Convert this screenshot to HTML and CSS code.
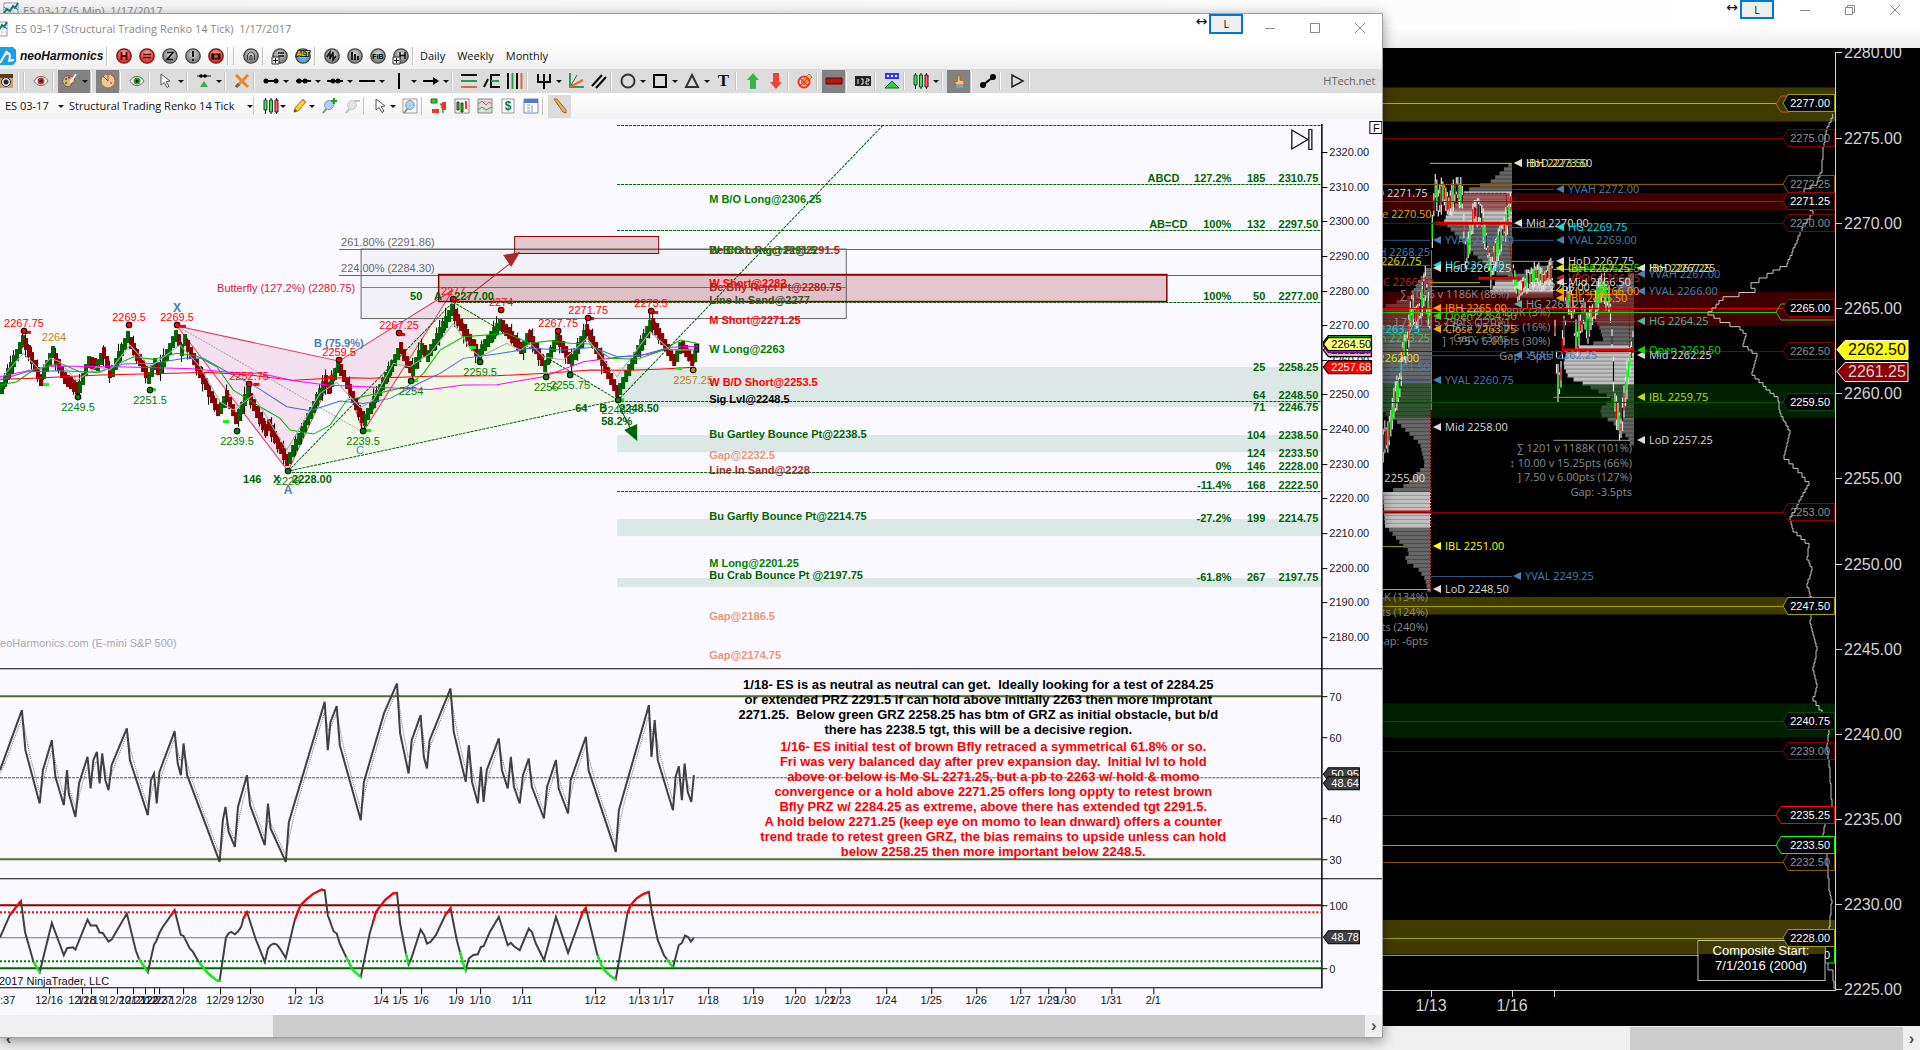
FILE: index.html
```html
<!DOCTYPE html>
<html lang="en">
<head>
<meta charset="utf-8">
<title>ES 03-17 charts</title>
<link rel="stylesheet" href="styles.css">
</head>
<body>
<svg class="defs" aria-hidden="true">
  <defs>
    <radialGradient id="gr" cx=".5" cy=".35"><stop offset="0" stop-color="#ffb0a8"/><stop offset="1" stop-color="#e8302c"/></radialGradient>
    <radialGradient id="gg" cx=".5" cy=".35"><stop offset="0" stop-color="#d8d8d8"/><stop offset="1" stop-color="#858585"/></radialGradient>
    <symbol id="red" viewBox="0 0 16 16"><circle cx="8" cy="8" r="7.2" fill="url(#gr)" stroke="#6b1512" stroke-width="1.3"/></symbol>
    <symbol id="gray" viewBox="0 0 16 16"><circle cx="8" cy="8" r="7.2" fill="url(#gg)" stroke="#444" stroke-width="1.3"/></symbol>
    <symbol id="cursor" viewBox="0 0 16 16"><path d="M3 1l9 7-4 .6 3 4.6-2 1.3-2.800-5L3 12z" fill="#fff" stroke="#555"/></symbol>
    <symbol id="candles" viewBox="0 0 16 16"><path d="M2.500 0v16M8 0v16M13.500 0v16" stroke="#111"/><path d="M1 2h3v10H1zM6.500 2h3v12h-3z" fill="#4be04b" stroke="#143"/><path d="M12 2h3v12h-3z" fill="#f66" stroke="#511"/></symbol>
    <symbol id="pencil" viewBox="0 0 16 16"><path d="M2 14l1-4 8-9 3 3-8 9z" fill="#fc3" stroke="#a70"/><path d="M2 14l1-3 2 2z" fill="#333"/><path d="M10 2l3 3 1-1-3-3z" fill="#e77"/></symbol>
    <symbol id="lens" viewBox="0 0 16 16"><path d="M2 15l4-5" stroke="#789" stroke-width="2"/><circle cx="8" cy="7" r="4.500" fill="#a9d2ee" stroke="#7f9fb8"/></symbol>
    <symbol id="eye" viewBox="0 0 16 16"><path d="M1 8c3-6 11-6 14 0-3 6-11 6-14 0z" fill="#fff" stroke="#765"/><circle cx="8" cy="8" r="3.500" fill="currentColor"/><circle cx="8" cy="8" r="1.500"/></symbol>
    <symbol id="win" viewBox="0 0 16 16"><path d="M1 1h14v14H1z" fill="#fff" stroke="#8895aa"/><path d="M5 1v14M10 1v14M1 6h14M1 11h14" stroke="#cdd6e4"/><path d="M1 11l3-4 3 2 3-5 2 2 3-5" fill="none" stroke="#17805b" stroke-width="2"/><path d="M1 5l5 4 5-5 4 4" fill="none" stroke="#36c" stroke-width="1"/></symbol>
  </defs>
</svg>

<main class="desktop">
  <section class="window back" aria-label="ES 03-17 5 Min">
    <header class="title">
      <svg class="icon"><use href="#win"/></svg><h2>ES 03-17 (5 Min)&nbsp; 1/17/2017</h2>
      <div class="controls"><span class="grip">↔</span><button class="link">L</button>
        <button aria-label="Minimize"><svg class="ctl" viewBox="0 0 12 12"><path d="M1 6.500h10"/></svg></button>
        <button aria-label="Restore"><svg class="ctl" viewBox="0 0 12 12"><path d="M1.500 3.500h7v7h-7zM3.500 3.500v-2h7v7h-2"/></svg></button>
        <button aria-label="Close"><svg class="ctl" viewBox="0 0 12 12"><path d="M1 1l10 10M11 1L1 11"/></svg></button></div>
    </header>
    <div class="strip"></div>
    <svg class="chart dark" id="profile" viewBox="0 48 1920 978" role="img" aria-label="5 minute chart with volume profile"></svg>
    <footer class="scroll"><button aria-label="Scroll left">‹</button><div class="track"><div class="thumb"></div></div><button aria-label="Scroll right">›</button></footer>
  </section>

  <section class="window front" aria-label="ES 03-17 Renko">
    <header class="title">
      <svg class="icon"><use href="#win"/></svg><h1>ES 03-17 (Structural Trading Renko 14 Tick)&nbsp; 1/17/2017</h1>
      <div class="controls"><span class="grip">↔</span><button class="link">L</button>
        <button aria-label="Minimize"><svg class="ctl" viewBox="0 0 12 12"><path d="M1 6.500h10"/></svg></button>
        <button aria-label="Maximize"><svg class="ctl" viewBox="0 0 12 12"><path d="M1.500 1.500h9v9h-9z"/></svg></button>
        <button aria-label="Close"><svg class="ctl" viewBox="0 0 12 12"><path d="M1 1l10 10M11 1L1 11"/></svg></button></div>
    </header>

    <nav class="bar harmonics">
      <svg class="logo" viewBox="0 0 16 18"><path d="M0 0h13l3 3v12l-3 3H0z" fill="#1c9fe6"/><path d="M0 16l7-12M5 8c4-4 6-1 4 6M8 14l6-1" fill="none" stroke="#fff" stroke-width="2"/></svg>
      <b class="brand">neoHarmonics</b><i class="sep"></i>
      <button class="tb" aria-label="Harmonics"><svg class="icon"><use href="#red"/><path d="M5.500 4v8M10.500 4v8M5 8h6" stroke="#400" stroke-width="1.800"/></svg></button>
      <button class="tb" aria-label="Levels"><svg class="icon"><use href="#red"/><path d="M4 6.500h8M4 9.500h8" stroke="#400" stroke-width="1.600"/></svg></button>
      <button class="tb" aria-label="Zigzag"><svg class="icon"><use href="#gray"/><path d="M5 4.500h6L5 11.500h6" fill="none" stroke="#111" stroke-width="1.600"/></svg></button>
      <button class="tb" aria-label="Alert"><svg class="icon"><use href="#gray"/><path d="M8 3v6M8 11v2" stroke="#111" stroke-width="2"/></svg></button>
      <button class="tb" aria-label="Snapshot"><svg class="icon"><use href="#red"/><path d="M3.500 5.500h9v6h-9z"/><circle cx="8" cy="8.500" r="2" fill="#e43"/></svg></button>
      <i class="sep"></i><i class="sep"></i>
      <button class="tb" aria-label="Magnet"><svg class="icon"><use href="#gray"/><path d="M4.500 12V7q3.500-6 7 0v5M7 12V8q1-2 2 0v4" fill="none" stroke="#333"/></svg></button><i class="sep"></i>
      <button class="tb" aria-label="Add level"><svg class="icon"><use href="#gray"/><path d="M6 5h6M6 8h6" stroke="#111" stroke-width="1.500"/><path d="M0 9h7v7H0z" fill="#eee" stroke="#333"/><path d="M3.500 10v5M1 12.500h5" stroke="#111"/></svg></button>
      <button class="tb" aria-label="Alternate"><svg class="icon"><use href="#gray"/><path d="M4 10h8l-2 4H6z" fill="#3bb6ef"/><text x="8" y="8" class="glyph alt">ALT</text></svg></button><i class="sep"></i>
      <button class="tb" aria-label="Swings"><svg class="icon"><use href="#gray"/><path d="M3 9l3-5v7l3-7v8l3-4" fill="none" stroke="#111" stroke-width="1.500"/></svg></button>
      <button class="tb" aria-label="Volume"><svg class="icon"><use href="#gray"/><path d="M5 4v8M8 6v6M11 8v4" stroke="#111" stroke-width="1.800"/></svg></button>
      <button class="tb" aria-label="Fibonacci"><svg class="icon"><use href="#gray"/><text x="8" y="11" class="glyph">FIB</text></svg></button>
      <button class="tb" aria-label="Add pattern"><svg class="icon"><use href="#gray"/><path d="M7 4v7M12 4v7M7 7.500h5" stroke="#111" stroke-width="1.500"/><path d="M0 9h7v7H0z" fill="#eee" stroke="#333"/><path d="M3.500 10v5M1 12.500h5" stroke="#111"/></svg></button>
      <i class="sep"></i><span class="words"><button>Daily</button><button>Weekly</button><button>Monthly</button></span>
    </nav>

    <nav class="bar tools">
      <button class="tb" aria-label="Camera"><svg class="icon"><path d="M1 1h14v14H1z" fill="#c9a36a"/><path d="M1 1h14v4H1z" fill="#5c3a20"/><circle cx="8" cy="9" r="4.500" fill="#eee" stroke="#333"/><circle cx="8" cy="9" r="2.500" fill="#223"/></svg></button><i class="sep"></i><i class="sep"></i>
      <button class="tb redish" aria-label="Hide"><svg class="icon"><use href="#eye"/></svg></button><i class="sep"></i>
      <button class="dd on" aria-label="Palette"><svg class="icon"><path d="M1 6c2-5 11-4 12 2-1 3-4 1-4 4-1 4-10 1-8-6z" fill="#e3b871" stroke="#754"/><circle cx="4" cy="6" r="1.200" fill="#36c"/><circle cx="7" cy="4.500" r="1.200" fill="#d22"/><circle cx="4" cy="10" r="1.200" fill="#2a2"/><path d="M14 1l-6 9" stroke="#eee" stroke-width="2"/></svg></button><i class="sep"></i>
      <button class="tb on" aria-label="Cookie"><svg class="icon"><circle cx="8" cy="8" r="7" fill="#eec795" stroke="#a63"/><path d="M8 8L3 3M8 8V1" stroke="#c33"/><circle cx="11" cy="10" r="1" fill="#b65"/></svg></button><i class="sep"></i>
      <button class="tb greenish" aria-label="Show"><svg class="icon"><use href="#eye"/></svg></button><i class="sep"></i>
      <button class="dd" aria-label="Cursor"><svg class="icon"><use href="#cursor"/></svg></button><i class="sep"></i>
      <button class="dd" aria-label="Marker"><svg class="icon"><path d="M1 3h14" stroke="#111"/><circle cx="5" cy="3" r="1.800"/><circle cx="9" cy="3" r="1.800"/><path d="M8 8l4 6H4z" fill="#35b34a"/></svg></button><i class="sep"></i>
      <button class="tb" aria-label="Remove"><svg class="icon"><path d="M2 2l12 12M14 2L2 14" stroke="#e7892b" stroke-width="3"/><path d="M2 14l3-3" stroke="#666" stroke-width="3"/></svg></button><i class="sep"></i>
      <button class="dd" aria-label="Segment"><svg class="icon"><path d="M1 8h14" stroke="#000" stroke-width="2"/><circle cx="3" cy="8" r="2.500"/><circle cx="13" cy="8" r="2.500"/></svg></button>
      <button class="dd" aria-label="Ray"><svg class="icon"><path d="M1 8h15" stroke="#000" stroke-width="2"/><circle cx="4" cy="8" r="2.500"/><circle cx="10" cy="8" r="2.500"/></svg></button>
      <button class="dd" aria-label="Extended line"><svg class="icon"><path d="M0 8h16" stroke="#000" stroke-width="2"/><circle cx="6" cy="8" r="2.500"/><circle cx="11" cy="8" r="2.500"/></svg></button>
      <button class="dd" aria-label="Horizontal line"><svg class="icon"><path d="M0 8h16" stroke="#000" stroke-width="2"/></svg></button>
      <button class="dd" aria-label="Vertical line"><svg class="icon"><path d="M8 0v16" stroke="#000" stroke-width="2"/></svg></button>
      <button class="dd" aria-label="Arrow line"><svg class="icon"><path d="M0 8h12" stroke="#000" stroke-width="2"/><path d="M10 4l6 4-6 4z"/></svg></button><i class="sep"></i>
      <button class="tb" aria-label="Retracement"><svg class="icon"><path d="M0 2h16" stroke="#111" stroke-width="2"/><path d="M0 8h16" stroke="#2a9d4d" stroke-width="2"/><path d="M0 14h16" stroke="#e8662f" stroke-width="2"/></svg></button>
      <button class="tb" aria-label="Extension"><svg class="icon"><path d="M7 2h9M7 14h9M7 1v14M0 14l4-8" stroke="#111" stroke-width="2" fill="none"/><path d="M7 8h8" stroke="#2a9d4d" stroke-width="2"/></svg></button>
      <button class="tb" aria-label="Time lines"><svg class="icon"><path d="M1 0v16M10 0v16" stroke="#111" stroke-width="2"/><path d="M5.500 0v16" stroke="#2a9d4d" stroke-width="2"/><path d="M14.500 0v16" stroke="#e8662f" stroke-width="2"/></svg></button><i class="sep"></i>
      <button class="dd" aria-label="Pitchfork"><svg class="icon"><path d="M2 1v8h12V1M8 1v15" fill="none" stroke="#000" stroke-width="2"/></svg></button>
      <button class="tb" aria-label="Fan"><svg class="icon"><path d="M2 0v14h14" fill="none" stroke="#2a9d4d" stroke-width="2"/><path d="M2 14L9 2" stroke="#555"/><path d="M2 14l13-7" stroke="#e8662f" stroke-width="2"/></svg></button>
      <button class="tb" aria-label="Channel"><svg class="icon"><path d="M1 13L11 2M5 15L15 4" stroke="#000" stroke-width="2"/></svg></button><i class="sep"></i>
      <button class="dd" aria-label="Ellipse"><svg class="icon"><circle cx="8" cy="8" r="6.500" fill="none" stroke="#333" stroke-width="2"/></svg></button>
      <button class="dd" aria-label="Rectangle"><svg class="icon"><path d="M2 2h12v12H2z" fill="none" stroke="#000" stroke-width="2"/></svg></button>
      <button class="dd" aria-label="Triangle"><svg class="icon"><path d="M8 2l6 12H2z" fill="none" stroke="#333" stroke-width="2"/></svg></button>
      <button class="tb serif">T</button><i class="sep"></i>
      <button class="tb" aria-label="Arrow up"><svg class="icon"><path d="M8 0l6 7h-3v9H5V7H2z" fill="#3bb54a"/></svg></button>
      <button class="tb" aria-label="Arrow down"><svg class="icon"><path d="M8 16l6-7h-3V0H5v9H2z" fill="#f44336"/></svg></button><i class="sep"></i>
      <button class="tb" aria-label="No drawing"><svg class="icon"><path d="M4 9l8-8 3 3-8 8z" fill="#ffcf4a" stroke="#b70"/><circle cx="7" cy="9" r="5.500" fill="none" stroke="#e33" stroke-width="2"/><path d="M3 5l8 8M11 5l-8 8" stroke="#e33" stroke-width="1.500"/></svg></button><i class="sep"></i>
      <button class="tb on" aria-label="Zone"><svg class="icon"><path d="M0 5h16v6H0z" fill="#b11" stroke="#600"/></svg></button><i class="sep"></i>
      <button class="tb" aria-label="Counter"><svg class="icon"><path d="M0 3h16v10H0z" fill="#222"/><path d="M3 6v5M6 6h2v5H6M11 6h3v2h-3v3h3" fill="none" stroke="#eee"/></svg></button><i class="sep"></i>
      <button class="tb" aria-label="Session"><svg class="icon"><path d="M1 0h14v6H1z" fill="#33f"/><path d="M3 3h2M7 3h2M11 3h2" stroke="#fff" stroke-width="2"/><path d="M8 8l7 7H1z" fill="#3c4" stroke="#063"/></svg></button><i class="sep"></i>
      <button class="dd" aria-label="Chart style"><svg class="icon"><use href="#candles"/></svg></button><i class="sep"></i>
      <button class="tb on" aria-label="Pointer"><svg class="icon"><path d="M7 2h2v5l4 1v4H5L3 8l3 1z" fill="#f5c091" stroke="#a63"/><path d="M5 12h7v3H5z" fill="#4bd"/></svg></button><i class="sep"></i>
      <button class="tb" aria-label="Link"><svg class="icon"><path d="M3 12l10-8" stroke="#000" stroke-width="2"/><circle cx="3" cy="12" r="3"/><circle cx="13" cy="4" r="3"/></svg></button><i class="sep"></i>
      <button class="tb" aria-label="Play"><svg class="icon"><path d="M3 2l11 6-11 6z" fill="none" stroke="#222" stroke-width="1.500"/></svg></button><i class="sep"></i>
      <a class="brandlink" href="#">HTech.net</a>
    </nav>

    <nav class="bar setup">
      <span class="pick"><select aria-label="Instrument" class="inst"><option>ES 03-17</option></select></span>
      <span class="pick"><select aria-label="Period" class="period"><option>Structural Trading Renko 14 Tick</option></select></span><i class="sep"></i>
      <button class="dd" aria-label="Chart style"><svg class="icon"><use href="#candles"/></svg></button>
      <button class="dd" aria-label="Draw"><svg class="icon"><use href="#pencil"/></svg></button>
      <button class="tb" aria-label="Zoom in"><svg class="icon"><use href="#lens"/><path d="M13 0v6M10 3h6" stroke="#1a1" stroke-width="2"/></svg></button>
      <button class="tb faded" aria-label="Zoom out"><svg class="icon"><use href="#lens"/><path d="M10 3h6" stroke="#888" stroke-width="2"/></svg></button><i class="sep"></i>
      <button class="dd" aria-label="Cursor"><svg class="icon"><use href="#cursor"/></svg></button>
      <button class="tb" aria-label="Data box"><svg class="icon"><path d="M1 1h14v14H1z" fill="#fff" stroke="#999"/><use href="#lens"/></svg></button><i class="sep"></i>
      <button class="tb" aria-label="Trader"><svg class="icon"><path d="M0 1h6v4H0zM9 6h3v9" fill="#3c3" stroke="#171"/><path d="M1 11h7v4H1zM11 4h4v8h-4z" fill="#e33"/></svg></button>
      <button class="tb" aria-label="Series"><svg class="icon"><path d="M1 1h14v14H1z" fill="#fff" stroke="#888"/><path d="M3 4h2v8H3zM7 5h2v9H7z" fill="#3c3" stroke="#141"/><path d="M11 3h2v8h-2z" fill="#e33"/></svg></button>
      <button class="tb" aria-label="Indicators"><svg class="icon"><path d="M1 1h14v14H1z" fill="#ddd" stroke="#888"/><path d="M1 6l4-3 4 4 3-3 3 2" fill="none" stroke="#e55"/><path d="M1 12l4-3 4 3 6-3" fill="none" stroke="#3a3"/></svg></button>
      <button class="tb" aria-label="Strategies"><svg class="icon"><path d="M2 1h12v14H2z" fill="#fff" stroke="#999"/><text x="8" y="12" class="glyph cash">$</text></svg></button>
      <button class="tb" aria-label="Properties"><svg class="icon"><path d="M1 1h14v14H1z" fill="#fff" stroke="#78b"/><path d="M1 1h14v4H1z" fill="#57c"/><path d="M4 7h3M4 10h3M4 13h3M9 7v7" stroke="#79d"/></svg></button><i class="sep"></i>
      <button class="tb lit" aria-label="Edit"><svg class="icon"><path d="M2 1l3 0 9 11v3l-3-1z" fill="#f4ab50" stroke="#a62"/></svg></button>
    </nav>

    <svg class="chart light" id="renko" viewBox="0 119 1382 896" role="img" aria-label="Renko chart with oscillators"></svg>
    <footer class="scroll"><div class="track"><div class="thumb"></div></div><button aria-label="Scroll right">›</button></footer>
  </section>
</main>
<script src="charts.js"></script>
</body>
</html>
```
FILE: styles.css
```css
* { box-sizing: border-box; }
body { margin: 0; background: #f0f0f0; font: 12px/16px "Open Sans", "Noto Sans", sans-serif; color: #111; }
button { border: 0; padding: 0; background: none; font: inherit; color: inherit; }
.defs { position: absolute; width: 0; height: 0; }
.desktop { position: relative; min-height: 100vh; overflow: hidden; background: #f0f0f0; }
.window { display: flex; flex-direction: column; }
.front { position: absolute; top: 13px; left: 0; width: calc(72% + 1px); background: #fff; border: solid #a0a0a0; border-width: 1px 1px 1px 0; box-shadow: 0 3px 12px rgba(0,0,0,.4); }

.title { display: flex; align-items: center; background: #fff; color: #888; overflow: hidden; }
.title h1, .title h2 { margin: 0; font-size: 11px; font-weight: 400; line-height: 16px; white-space: nowrap; }
.back .title { height: 25px; padding: 0 3px; gap: 4px; align-items: flex-start; background: linear-gradient(90deg, #f4f4f4, #fff); }
.back .title h2 { padding-top: 3px; }
.back .title > .icon { margin-top: 2px; }
.front .title { height: 29px; gap: 7px; }
.front .title > .icon { margin-left: -8px; }
.controls { margin-left: auto; display: flex; align-items: flex-start; height: 100%; }
.controls > button:not(.link) { width: 45px; height: 28px; display: grid; place-items: center; }
.back .controls > button:not(.link) { height: 20px; }
.ctl { width: 12px; height: 12px; fill: none; stroke: #8a8a8a; }
.grip { color: #111; font: 14px/14px "DejaVu Sans", sans-serif; margin-right: 2px; }
.link { width: 34px; height: 20px; border: 2px solid #0078d7; background: #eee; color: #111; font-size: 11px; line-height: 14px; }
.back .link { height: 19px; margin-right: 8px; }
.front .link { margin-right: 4px; }
.strip { height: 23px; background: linear-gradient(#fff, #eee); }

.icon { width: 16px; height: 16px; flex: none; overflow: visible; }
.bar { display: flex; align-items: center; overflow: hidden; }
.harmonics { height: 26px; background: linear-gradient(#fff, #f1f1f1); }
.tools { height: 24px; background: #dcdcdc; }
.tools > .tb:first-child { margin-left: -6px; }
.setup { height: 26px; background: linear-gradient(#fff, #f3f3f3); }
.tb, .dd { flex: none; height: 23px; display: flex; align-items: center; }
.tb { width: 23px; justify-content: center; }
.dd { width: 32px; padding-left: 4px; gap: 4px; }
.setup .dd { width: 29px; gap: 1px; }
.dd::after, .pick::after { content: ""; border: 3px solid transparent; border-top-color: #111; border-bottom: 0; }
.on { background: #828282; }
.lit { background: #dcdcdc; }
.faded { opacity: .5; filter: grayscale(1); }
.redish { color: #c33; }
.greenish { color: #2a2; }
.serif { font: bold 17px/20px "Liberation Serif", serif; }
.sep { flex: none; width: 6px; height: 18px; border-left: 1px solid #c4c4c4; border-right: 1px solid transparent; background: linear-gradient(#fff, #fff) 0 0 / 1px 100% no-repeat; }
.logo { width: 16px; height: 18px; flex: none; }
.brand { font: italic bold 12px/16px "Liberation Sans", sans-serif; width: 86px; margin-left: 4px; }
.words { display: flex; gap: 12px; margin-left: 2px; font-size: 11px; }
.brandlink { margin-left: auto; margin-right: 7px; color: #666; font-size: 11px; text-decoration: none; }
.pick { display: flex; align-items: center; gap: 4px; }
.pick select { appearance: none; border: 0; padding: 0; background: none; font: 11px/16px "Open Sans", sans-serif; color: #111; }
.inst { width: 49px; }
.period { width: 174px; }
.pick:first-child { margin-left: 5px; margin-right: 5px; }
.glyph { font: bold 7px "Liberation Sans", sans-serif; text-anchor: middle; }
.alt { fill: #ffe600; stroke: #222; stroke-width: 2px; paint-order: stroke; }
.cash { font-size: 12px; fill: #171; }

.scroll { display: flex; height: 22px; background: #f0f0f0; color: #555; }
.scroll .track { flex: 1; display: flex; }
.scroll .thumb { background: #cdcdcd; }
.scroll button { width: 17px; font: bold 17px/16px "Liberation Sans", sans-serif; }
.front .thumb { flex: 1; margin-left: 20%; }
.back .scroll { height: 24px; padding-top: 1px; }
.back .thumb { width: 14.500%; margin-left: auto; }

.chart { display: block; width: 100%; height: auto; font-family: "Liberation Sans", sans-serif; font-size: 11px; }
.light { background: #f9f9ff; }
.dark { background: #000; }
.chart .b { font-weight: bold; }
.chart .note { font-size: 13px; font-weight: bold; text-anchor: middle; }
.chart .mark { font-size: 12px; }
.chart .axis { font-size: 16px; fill: #d3d3d3; }
.chart .ui { font-family: "Open Sans", sans-serif; font-size: 11px; }
.chart .end { text-anchor: end; }
.chart .mid { text-anchor: middle; }
.chart .start { font-size: 13px; fill: #fff; text-anchor: middle; }
```
FILE: charts.js
```js
const NS = 'http://www.w3.org/2000/svg';
let root;
function el(tag, attrs, text) {
  const n = document.createElementNS(NS, tag);
  for (const k in attrs) n.setAttribute(k, attrs[k]);
  if (text !== undefined) n.textContent = text;
  root.appendChild(n);
  return n;
}
const line = (x1, y1, x2, y2, stroke, extra) => el('line', { x1, y1, x2, y2, stroke, ...extra });
const rect = (x, y, width, height, fill, extra) => el('rect', { x, y, width, height, fill, ...extra });
const path = (pts, stroke, extra) => el('polyline', { points: pts.map(p => p.join(',')).join(' '), fill: 'none', stroke, ...extra });
const label = (x, y, s, fill, cls) => el('text', { x, y: y + 4, fill, class: cls || '' }, s);
const pairs = s => s.trim().split(/\s+/).map(p => p.split(',').map(Number));
const map = (s, x0, y0, sx, sy) => pairs(s).map(([x, y]) => [+(x0 + x / sx).toFixed(1), +(y0 + y / sy).toFixed(1)]);
let seed = 7;
const rnd = () => (seed = (seed * 16807) % 2147483647) / 2147483647;
function at(pts, x) {
  for (let i = 1; i < pts.length; i++) if (x <= pts[i][0]) {
    const [a, b] = [pts[i - 1], pts[i]];
    return a[1] + (b[1] - a[1]) * (x - a[0]) / (b[0] - a[0]);
  }
  return pts[pts.length - 1][1];
}
const slice = (pts, a, b) => [[a, at(pts, a)], ...pts.filter(p => p[0] > a && p[0] < b), [b, at(pts, b)]];

/* ---------- Renko window ---------- */
root = document.getElementById('renko');
const G = '#006400', DASH = { 'stroke-dasharray': '3 1' };

// support zones
[[367, 40], [435, 17], [519, 17], [578, 9]].forEach(([y, h]) => rect(617, y, 704, h, '#1e7838', { 'fill-opacity': .13 }));

// harmonic pattern fills
el('polygon', { points: '288,471 453,300 618,400', fill: '#adff2f', 'fill-opacity': .12 });
el('polygon', { points: '177,326 288,471 339,361', fill: '#dc3c78', 'fill-opacity': .13 });
el('polygon', { points: '339,361 363,432 453,290', fill: '#dc3c78', 'fill-opacity': .13 });
path(pairs('177,326 339,361 288,471 177,326'), '#dc3c5a');
path(pairs('339,361 363,432 453,290 339,361'), '#dc3c5a');
path(pairs('177,326 363,432'), '#aaa', { 'stroke-dasharray': '2 1' });
path(pairs('288,471 453,302 618,400 288,471'), G, DASH);
path(pairs('617,401 883,125'), G, DASH);

// retracement box and resistance zones
rect(361, 249, 485, 69.5, '#888', { 'fill-opacity': .06, stroke: '#666' });
line(339, 249.5, 1321, 249.5, '#666'); line(339, 275.5, 1321, 275.5, '#666');
line(361, 287.5, 846, 287.5, '#dc5078');
rect(514.5, 236.5, 144, 17, '#8b0000', { 'fill-opacity': .2, stroke: '#8b0000' });
rect(438.5, 274.5, 728, 27, '#8b0000', { 'fill-opacity': .2, stroke: '#8b0000', 'stroke-width': 1.5 });
[[617, 125.5], [617, 184.5], [617, 230.5], [453, 302.5], [617, 401.5], [288, 472.5], [617, 491.5]].forEach(([x, y]) => line(x, y, 1321, y, G, DASH));

// bricks
const swings = pairs('0,390 23,339 40,380 52,352 64,378 78,390 88,362 97,365 103,353 110,375 127,337 148,378 155,362 158,372 176,334 181,350 184,340 218,412 226,396 236,420 247,393 265,430 268,425 287,462 325,381 328,388 338,365 363,422 400,348 408,366 412,370 422,347 427,356 451,310 478,355 484,345 500,324 522,350 528,334 544,366 557,337 570,362 586,330 617,393 651,322 674,362 680,345 686,352 692,362 697,348');
for (let x = 1; x < 697; x += 3) {
  const y = at(swings, x), up = at(swings, x + 1.5) <= at(swings, x - 1.5);
  if (rnd() > .6) line(x + .5, y - 6 - rnd() * 8, x + .5, y + 6 + rnd() * 8, '#000');
  rect(x - 1, Math.round(y - 6), 4, 12, up ? '#006400' : '#8b0000');
}
rect(695.5, 344, 3, 8, '#006400', { stroke: '#000' });

// averages, in units of a third of a pixel from (0,220) and (330,220)
const avg = (left, right, c) => path([...map(left, 0, 220, 3, 3), ...map(right, 330, 220, 3, 3)], c);
avg('0,478 100,475 300,465 520,460 620,457 760,466 880,481 1000,474', '60,473 120,475 300,469 500,467 660,459 780,450 900,451 1000,447 1090,442', '#f00');
avg('0,470 150,438 350,440 580,446 680,456 780,460 880,482 980,495', '100,500 300,508 400,495 500,494 640,470 760,425 860,412 960,402 1020,382 1100,379', '#f0f');
avg('0,480 80,455 180,452 290,457 370,432 460,430 560,414 610,415 680,455 760,495 860,560 930,572 1020,543', '100,550 180,535 270,488 330,460 400,415 500,402 600,385 700,390 790,382 860,410 930,407 1000,387 1100,390', '#4169e1');
avg('0,495 50,485 100,450 180,430 240,455 300,457 400,410 460,418 530,400 590,408 650,440 700,510 780,560 840,595 870,630 940,642 990,615 1040,540', '120,525 230,500 280,460 330,390 400,350 470,345 530,340 600,370 660,362 720,370 780,372 840,415 920,418 1000,390 1050,360 1100,370', '#00b400');
avg('0,478 70,400 120,450 150,415 180,425 230,482 290,440 330,450 390,375 450,440 540,375 600,440 660,545 700,570 760,525 860,690 960,520 1010,487 1060,540', '90,562 130,540 190,430 240,440 300,400 370,310 420,385 450,410 530,370 570,390 600,370 640,410 700,420 770,355 860,470 960,335 1020,390 1090,390', '#a9a9a9');

// lime trend flashes and swing dots
map('75,337 540,319 760,493', 0, 220, 3, 3).forEach(([x, y]) => rect(x, y - 1.5, 6, 3, '#f00'));
rect(327, 376, 6, 3, '#f00');
[[43, 383], [150, 388], [223, 420], [365, 429], [412, 379], [470, 346], [676, 367], [618, 398]].forEach(([x, y]) => rect(x, y, 6, 3, '#0f0'));
[[453, 299], [399, 333], [588, 317], [652, 311]].forEach(([x, y]) => rect(x, y, 6, 3, '#f00'));
const dot = (x, y, c) => el('circle', { cx: x, cy: y, r: 2.8, fill: c, stroke: '#000' });
[[24, 331, '2267.75'], [129, 325, '2269.5'], [177, 325, '2269.5'], [249, 384, '2252.75'], [339, 360, '2259.5'], [399, 333, '2267.25'], [453, 299, '2277'], [501, 310, '2274'], [558, 331, '2267.75'], [588, 318, '2271.75'], [651, 311, '2273.5']]
  .forEach(([x, y, s]) => { dot(x, y, '#f00'); label(x, y - 8, s, '#f00', 'mid'); });
[[78, 397, '2249.5'], [150, 390, '2251.5'], [237, 431, '2239.5'], [288, 471, '2228'], [363, 431, '2239.5'], [411, 381, '2254'], [480, 362, '2259.5'], [546, 377, '2256'], [570, 375, '2255.75'], [618, 400, '2248.5']]
  .forEach(([x, y, s]) => { dot(x, y, '#008000'); label(x, y + 10, s, '#008000', 'mid'); });
dot(693, 370, '#b8860b'); label(693, 380, '2257.25', '#b8860b', 'mid'); label(54, 337, '2264', '#b8860b', 'mid');
label(177, 308, 'X', '#4682b4', 'b mid mark'); label(288, 490, 'A', '#4682b4', 'b mid mark'); label(360, 450, 'C', '#4682b4', 'mid');
label(314, 343, 'B (75.9%)', '#4682b4', 'b');
label(217, 288, 'Butterfly (127.2%) (2280.75)', '#dc143c');
label(341, 242, '261.80% (2291.86)', '#696969'); label(341, 268, '224.00% (2284.30)', '#696969');
[[243, 479, '146'], [273, 479, 'X'], [292, 479, '2228.00'], [410, 296, '50'], [434, 296, 'A'], [454, 296, '2277.00'], [575, 408, '64'], [599, 408, 'B'], [619, 408, '2248.50'], [601, 421, '58.2%']].forEach(([x, y, s]) => label(x, y, s, G, 'b'));

// projected moves
line(463, 300, 512, 262, '#a52a2a'); el('polygon', { points: '503,255 520,252 511,267', fill: '#a52a2a' });
line(618, 404, 630, 428, G); el('polygon', { points: '624,430 637,424 637,441', fill: G });

[[199, 'M B/O Long@2306.25', '#008000'], [250, 'Be Crab Rejct Pt@2291.5', '#a52a2a'], [250, 'W B/O Long@2291.5', '#008000'], [283, 'W Short@2282', '#f00'], [287, 'Be Bfly Rejct Pt@2280.75', '#a52a2a'], [300, 'Line In Sand@2277', '#3b5323'], [320, 'M Short@2271.25', '#f00'], [349, 'W Long@2263', '#008000'], [382, 'W B/D Short@2253.5', '#f00'], [399, 'Sig Lvl@2248.5', '#000'], [434, 'Bu Gartley Bounce Pt@2238.5', G], [455, 'Gap@2232.5', '#e9967a'], [470, 'Line In Sand@2228', '#a52a2a'], [516, 'Bu Garfly Bounce Pt@2214.75', G], [563, 'M Long@2201.25', '#008000'], [575, 'Bu Crab Bounce Pt @2197.75', G], [616, 'Gap@2186.5', '#e9967a'], [655, 'Gap@2174.75', '#e9967a']]
  .forEach(([y, s, c]) => label(709, y, s, c, 'b'));
[[178, 'ABCD', '127.2%', '185', '2310.75'], [224, 'AB=CD', '100%', '132', '2297.50'], [296, '', '100%', '50', '2277.00'], [367, '', '', '25', '2258.25'], [395, '', '', '64', '2248.50'], [407, '', '', '71', '2246.75'], [435, '', '', '104', '2238.50'], [453, '', '', '124', '2233.50'], [466, '', '0%', '146', '2228.00'], [485, '', '-11.4%', '168', '2222.50'], [518, '', '-27.2%', '199', '2214.75'], [577, '', '-61.8%', '267', '2197.75']]
  .forEach(([y, ...cols]) => [1179, 1231, 1265, 1318].forEach((x, i) => cols[i] && label(x + (i === 0 && y > 200 ? 8 : 0), y, cols[i], G, 'b end')));

// replay glyph and F box
el('path', { d: 'M1291.500 130v19l16-9.500zM1308.500 129.500h3v20h-3z', fill: 'none', stroke: '#000', 'stroke-width': 1.2 });
rect(1369.5, 121.5, 12, 12, '#fff', { stroke: '#000' }); label(1376, 128, 'F', '#000', 'mid');

// price scale
line(1321.5, 124, 1321.5, 988, '#000', { 'stroke-width': 1.5 });
for (let p = 2180; p <= 2320; p += 10) {
  const y = Math.round(152 + (2320 - p) * 3.463);
  line(1321, y + .5, 1327, y + .5, '#000'); label(1329, y, p + '.00', '#222');
}
function flag(y, s, fill, color, w, stroke) {
  el('path', { d: `M1323 ${y}l5-6.500h${w}v13h-${w}z`, fill, stroke: stroke || '#000', 'stroke-width': 1.3 });
  if (s) label(1331, y, s, color);
}
flag(350, '2262.27', '#c0c0c0', '#000', 43); flag(346, '', '#f0f', '#000', 43, '#808'); flag(342, '', '#0c0', '#000', 43);
flag(344, '2264.50', '#ffff80', '#000', 43); flag(367, '2257.68', '#f00', '#fff', 43);
label(-6, 643, 'neoHarmonics.com (E-mini S&P 500)', '#a9a9a9');

// oscillator panels
line(0, 668.5, 1382, 668.5, '#000'); line(0, 878.5, 1382, 878.5, '#000'); line(0, 987.5, 1322, 987.5, '#000');
[696, 859].forEach(y => line(0, y, 1321, y, '#556b2f', { 'stroke-width': 2 }));
line(0, 777.5, 1321, 777.5, '#555', { 'stroke-dasharray': '3 1' });
[[697, 70], [738, 60], [819, 40], [860, 30], [906, 100], [969, 0]].forEach(([y, s]) => { line(1321, y - .5, 1327, y - .5, '#000'); label(1329, y, s, '#222'); });
const o1 = map('0,330 49,150 57,270 89,430 96,330 116,240 124,350 143,435 150,330 154,400 169,470 177,370 196,290 203,385 209,300 217,275 223,370 229,280 236,360 243,390 250,315 284,205 291,300 331,465 338,360 345,340 351,430 357,335 391,213 398,310 405,345 411,250 419,345 492,605 499,480 505,440 512,515 526,560 533,440 553,345 560,435 593,555 600,430 606,505 640,605 647,485 727,125 734,270 740,185 754,138 761,255 808,480 815,365 860,160 889,70 896,220 915,340 922,240 942,165 949,290 956,325 962,240 1009,85 1016,215 1043,365 1050,255 1057,365 1070,430 1077,320 1083,425 1090,330 1117,235 1124,330 1137,385 1144,290 1151,380 1164,430 1171,345 1184,295 1191,380 1218,475 1225,380 1245,300 1251,385 1272,460 1278,360 1312,230 1318,330 1379,575 1386,450 1453,135 1459,290 1466,180 1473,300 1507,450 1513,350 1520,318 1527,420 1533,310 1540,395 1548,425 1554,345', 0, 660, 2.24, 3);
const lag = []; let e = 775;
for (let x = 0; x < 694; x += 2) { e += (at(o1, x) - e) * .42; lag.push([x, +e.toFixed(1)]); }
path(lag, '#777', { 'stroke-dasharray': '1 1' });
path(o1, '#404040', { 'stroke-width': 2 });

line(0, 905, 1321, 905, '#8b0000', { 'stroke-width': 2 });
line(0, 912, 1321, 912, '#f00', { 'stroke-width': 2, 'stroke-dasharray': '2 2' });
line(0, 937.5, 1321, 937.5, '#777');
line(0, 961, 1321, 961, '#008000', { 'stroke-width': 2, 'stroke-dasharray': '2 2' });
line(0, 968, 1321, 968, G, { 'stroke-width': 2 });
const o2 = map('0,832 22,765 47,722 56,815 75,905 89,936 116,788 143,885 150,864 163,861 169,868 196,778 203,796 216,796 223,817 230,818 243,844 250,838 284,760 304,870 311,895 331,936 345,853 350,843 357,818 364,801 391,750 405,824 411,827 425,865 432,875 445,905 465,938 485,960 492,961 506,832 512,819 518,815 526,822 533,814 540,800 545,775 553,755 572,835 593,905 600,865 606,855 613,850 620,853 627,865 640,893 660,780 673,735 686,718 700,702 720,688 727,690 734,765 747,813 754,820 761,850 775,890 790,930 808,950 828,820 842,755 862,720 880,700 889,698 896,790 909,880 915,912 921,895 942,808 950,825 956,850 964,845 976,825 997,765 1009,744 1023,840 1036,905 1043,930 1050,895 1060,884 1070,882 1077,860 1083,858 1097,815 1117,770 1137,855 1144,848 1151,858 1164,870 1184,805 1191,815 1200,850 1218,900 1245,770 1272,878 1305,755 1312,743 1338,885 1350,925 1365,945 1379,957 1405,760 1412,735 1425,715 1440,702 1453,695 1460,760 1473,840 1487,885 1507,922 1520,855 1527,848 1534,826 1541,830 1547,844 1554,833', 0, 660, 2.24, 3);
path(o2, '#404040', { 'stroke-width': 2 });
[[22, 47], [382, 391], [545, 553], [660, 727], [835, 889], [997, 1009], [1300, 1312], [1405, 1453]].forEach(([a, b]) => path(slice(o2, a / 2.24, b / 2.24), '#f00', { 'stroke-width': 2 }));
[[75, 89], [311, 331], [445, 492], [775, 808], [909, 915], [1030, 1043], [1338, 1379], [1493, 1507]].forEach(([a, b]) => path(slice(o2, a / 2.24, b / 2.24), '#0f0', { 'stroke-width': 2 }));
const chip = (y, s) => { el('path', { d: `M1323 ${y}l5-6.500h31v13h-31z`, fill: '#404040', stroke: '#000' }); label(1331, y, s, '#fff'); };
chip(774, '50.95'); chip(783, '48.64'); chip(937, '48.78');

['1/18- ES is as neutral as neutral can get.  Ideally looking for a test of 2284.25', 'or extended PRZ 2291.5 if can hold above initially 2263 then more improtant', '2271.25.  Below green GRZ 2258.25 has btm of GRZ as initial obstacle, but b/d', 'there has 2238.5 tgt, this will be a decisive region.']
  .forEach((s, i) => label(978, 685 + i * 15, s.replace(/ {2}/g, '\u00a0 '), '#000', 'note'));
['1/16- ES initial test of brown Bfly retraced a symmetrical 61.8% or so.', 'Fri was very balanced day after prev expansion day.  Initial lvl to hold', 'above or below is Mo SL 2271.25, but a pb to 2263 w/ hold & momo', 'convergence or a hold above 2271.25 offers long oppty to retest brown', 'Bfly PRZ w/ 2284.25 as extreme, above there has extended tgt 2291.5.', 'A hold below 2271.25 (keep eye on momo to lean dnward) offers a counter', 'trend trade to retest green GRZ, the bias remains to upside unless can hold', 'below 2258.25 then more important below 2248.5.']
  .forEach((s, i) => label(993, 747 + i * 15, s.replace(/ {2}/g, '\u00a0 '), '#f00', 'note'));
label(-1, 981, '2017 NinjaTrader, LLC', '#111');
label(0, 1000, ':37', '#111');
const tick = (x, s) => { line(Math.round(x) + .5, 988, Math.round(x) + .5, 994, '#000'); label(Math.round(x), 1000, s, '#111', 'mid'); };
'109 12/16,183 12/18,203 12/19,263 12/20,297 12/21,324 12/22,344 12/23,357 12/27,411 12/28,492 12/29,559 12/30,660 1/2,707 1/3,854 1/4,895 1/5,942 1/6,1022 1/9,1076 1/10,1170 1/11,1332 1/12,1432 1/13,1486 1/17'.split(',').forEach(t => { const [x, s] = t.split(' '); tick(x / 2.24, s); });
'41 1/18,142 1/19,236 1/20,303 1/22,337 1/23,438 1/24,539 1/25,640 1/26,740 1/27,801 1/29,841 1/30,942 1/31,1036 2/1'.split(',').forEach(t => { const [x, s] = t.split(' '); tick(690 + x / 2.24, s); });

/* ---------- Five minute window ---------- */
root = document.getElementById('profile');
const Y = p => 52.3 + (2280 - p) * 17.04;
const Q = (x, y) => [1380 + x / 3, 130 + y / 3];

// volume profiles: left edge per height, bright value area between two heights
function profile(right, edge, v0, v1) {
  for (let y = edge[0][0]; y < edge[edge.length - 1][0]; y += 4) {
    const x = at(edge, y), bright = y >= v0 && y <= v1;
    rect(x, y, right - x, 4, bright ? '#c0c0c0' : '#666');
    line(x, y + 3.5, right, y + 3.5, bright ? '#999' : '#4c4c4c');
  }
}
const edges = s => pairs(s).map(([y, x]) => [130 + y / 3, 1380 + x / 3]);
profile(1431, pairs('268,1426 280,1418 295,1410 305,1383 410,1383 420,1397 442,1420 463,1425 483,1406 492,1383 524,1385 528,1389 543,1402 550,1410 558,1404 567,1418 577,1425 590,1428'), 492, 524);
profile(1512, edges('100,385 150,330 170,270 185,250 240,210 265,190 290,210 330,250 360,275 400,320 425,350'), 190, 222);
profile(1553, edges('395,505 420,430 440,345 455,345 480,330 500,420'), 278, 292);
profile(1634, edges('430,745 480,700 520,650 560,645 590,660 625,670 640,620 655,560 700,550 735,565 755,610 775,650 790,680 800,695 830,660 850,665 880,710 920,745 935,750'), 345, 385);

// price bands
[[87.5, 34, '#807800'], [193, 17.5, '#800000'], [291.7, 34, '#800000'], [384, 34, '#004000'], [597, 17.5, '#807800'], [703.5, 34, '#004000'], [920, 34.5, '#807800']]
  .forEach(([y, h, c]) => rect(1380, y, 455, h, c, { 'fill-opacity': .5 }));

// intraday bars
function bars(s, amp) {
  const pts = pairs(s).map(([x, y]) => Q(x, y));
  for (let x = pts[0][0]; x <= pts[pts.length - 1][0]; x += 1.5) {
    const y = at(pts, x), h = 4 + rnd() * amp, t = rnd();
    line(x, y - h - rnd() * amp, x, y + h + rnd() * amp, '#e4e4e4', { 'stroke-width': 1.2 });
    line(x, y - h * .8, x, y + h * .8, t > .62 ? '#0e0' : t > .3 ? '#e00000' : '#000', { 'stroke-width': 1.2 });
  }
}
bars('10,940 30,900 40,830 60,760 70,650 80,660 95,520 105,560 120,540 135,460 145,540 152,590', 9);
bars('157,300 165,170 175,220 190,180 205,230 230,170 248,210 255,370 265,350 280,250 300,240 320,340 333,430 345,370 360,330 375,290 390,230 394,150', 8);
bars('400,430 415,490 430,465 470,430 490,450 510,425 518,430', 6);
bars('525,600 533,765 542,750 548,640 560,500 575,520 592,640 610,540 625,600 640,540 665,470 690,510 697,650 705,820 722,900 735,790 748,700 760,640', 9);
line(1431.5, 250, 1431.5, 410, '#0c0');
line(1430.5, 410, 1430.5, 590, '#8b0000', { 'stroke-dasharray': '2 1' });
path([Q(250, 190), Q(378, 190), Q(396, 420)], '#a00', { 'stroke-dasharray': '3 1' });
path([Q(640, 535), Q(748, 535), Q(748, 660)], '#a00', { 'stroke-dasharray': '3 1' });
[[165, 280, 395], [295, 445, 425], [550, 660, 763]].forEach(([a, y, b]) => line(...Q(a, y), ...Q(b, y), '#e00000', { 'stroke-width': 3 }));
line(1383, 512, 1431, 512, '#e00000', { 'stroke-width': 3 });

// horizontal levels
[[2277, '#ff9000', 1776], [2275, '#800000', 1783], [2272.25, '#8b5a00', 1783], [2271.25, '#b01010', 1783], [2270, '#800000', 1783], [2265, '#e00000', 1783], [2264.75, '#3c0', 1776], [2262.5, '#800000', 1783], [2259.5, '#005000', 1783], [2253, '#900000', 1783], [2247.5, '#a0a000', 1783], [2240.75, '#005000', 1783], [2239, '#800000', 1783], [2235.25, '#f00', 1776], [2233.5, '#0f0', 1776], [2232.5, '#8b5a00', 1783], [2228, '#a0a000', 1783], [2227, '#0f0', 1700]]
  .forEach(([p, c, x]) => { const y = Math.round(Y(p)) + .5; line(1383, y, x, y, c); });
const hl = (a, y, b, c) => line(...Q(a, y), ...Q(b, y), c);
hl(150, 100, 395, '#bdb76b'); hl(398, 163, 1200, '#8b5a00'); hl(398, 178, 522, '#2f5680'); hl(395, 293, 522, '#2a7a80'); hl(395, 331, 522, '#2f5680'); hl(10, 331, 150, '#2f5680'); hl(10, 406, 150, '#2a7a80'); hl(150, 458, 300, '#bb0'); hl(150, 470, 330, '#aaa'); hl(10, 677, 400, '#2f5680'); hl(10, 751, 150, '#2f5680'); hl(520, 802, 690, '#990'); hl(520, 931, 750, '#999'); hl(395, 394, 522, '#999'); hl(520, 418, 765, '#aaa'); hl(545, 575, 765, '#2a7a80');
line(1383, 546.5, 1403, 546.5, '#990'); line(1431, 576.5, 1512, 576.5, '#2f5680'); line(1383, 589.5, 1430, 589.5, '#aaa');

// session statistics
[[387, 492, '∑ 1046 v 1186K (88%)'], [511, 547, '∑ 38 v 1189K (3%)'], [387, 577, '] 7.00 v 5.75pts (120%)'], [511, 592, '↕ 2.50 v 15.25pts (16%)'], [511, 634, '] 1.75 v 6.00pts (30%)'], [385, 624, 'Gap: +3pts'], [515, 679, 'Gap: -5pts'], [756, 955, '∑ 1201 v 1188K (101%)'], [756, 999, '↕ 10.00 v 15.25pts (66%)'], [756, 1042, '] 7.50 v 6.00pts (127%)'], [756, 1087, 'Gap: -3.5pts']]
  .forEach(([x, y, s]) => { const q = Q(x, y); label(q[0], q[1], s, '#8c8c8c', 'ui end'); });
[[597, '∑ 1594 v 1184K (134%)'], [612, '↕ 23.25 v 15.00pts (124%)'], [627, '] 14.00 v 6.00pts (240%)'], [641, 'Gap: -6pts']].forEach(([y, s]) => label(1428, y, s, '#8c8c8c', 'ui end'));

// named levels
const W = '#dcdcdc', B = '#4682b4', YL = '#e8e800', O = '#ffa500', L = '#00e000', C = '#00e5e5', T = '#48b8a8';
function named(x, y, s, c) {
  el('path', { d: `M${x} ${y}l8-4v8z`, fill: c });
  label(x + 12, y, s, c, 'ui');
}
[[402, 98, 'IBH 2273.50', YL], [402, 98, 'HoD 2273.50', W], [527, 177, 'YVAH 2272.00', B], [402, 279, 'Mid 2270.00', W], [527, 291, 'HG 2269.75', C], [527, 330, 'YVAL 2269.00', B], [158, 330, 'YVAL 2269.00', B], [158, 404, 'HG 2267.50', C], [158, 415, 'HoD 2267.25', W], [527, 393, 'HoD 2267.75', W], [527, 414, 'Open 2267.25', L], [527, 414, 'IBH 2267.25', YL], [770, 414, 'IBH 2267.25', YL], [770, 414, 'HoD 2267.25', W], [770, 432, 'YVAH 2267.00', B], [527, 443, 'VPOC 2266.75', '#d02020'], [527, 457, 'Mid 2266.50', W], [402, 470, 'LoD 2266.00', W], [527, 483, 'Close 2266.00', O], [770, 483, 'YVAL 2266.00', B], [527, 505, 'IBL 2265.50', O], [402, 522, 'HG 2265.25', T], [158, 533, 'IBH 2265.00', O], [158, 558, 'Open 2264.50', '#4c2'], [158, 597, 'Close 2263.75', O], [402, 675, 'YVAH 2262.25', B], [770, 573, 'HG 2264.25', T], [770, 675, 'Mid 2262.25', W], [770, 660, 'Open 2262.50', L], [158, 749, 'YVAL 2260.75', B], [770, 800, 'IBL 2259.75', '#c0e000'], [158, 890, 'Mid 2258.00', W], [770, 930, 'LoD 2257.25', W]]
  .forEach(([x, y, s, c]) => named(...Q(x, y).map(Math.round), s, c));
named(1433, 546, 'IBL 2251.00', '#ff0'); named(1513, 576, 'YVAL 2249.25', B); named(1433, 589, 'LoD 2248.50', W);
[[143, 190, 'HoD 2271.75', W], [155, 252, 'Close 2270.50', O], [150, 366, 'YVAH 2268.25', B], [125, 393, 'IBH 2267.75', YL], [160, 457, 'VPOC 2266.50', '#d02020'], [120, 597, 'HG 2263.75', C], [150, 625, 'Open 2263.25', '#4c2'], [117, 685, 'IBL 2262.00', YL], [150, 711, 'YVAL 2261.50', B], [135, 1044, 'Mid 2255.00', W]]
  .forEach(([x, y, s, c]) => { const q = Q(x, y); label(q[0], q[1], s, c, 'ui end'); });

// composite profile outline, as steps
function steps(pts) {
  const out = [pts[0]];
  for (let i = 1; i < pts.length; i++) {
    const [a, b] = [pts[i - 1], pts[i]], n = Math.max(1, Math.round((b[1] - a[1]) / 4));
    for (let k = 1; k <= n; k++) {
      const y = a[1] + (b[1] - a[1]) * k / n;
      out.push([out[out.length - 1][0], y], [Math.round(a[0] + (b[0] - a[0]) * k / n), y]);
    }
  }
  return out;
}
const comp = [
  ...map('578,342 560,380 550,440 545,505 530,545 475,577 520,632 490,670 470,720 440,790 380,820 332,848 345,865 250,890 203,935 240,955 300,980 317,1000 310,1030 350,1060 335,1115 390,1170 415,1190 420,1230 433,1260', 1640, 0, 3, 3),
  ...map('1178,66 1190,90 1172,165 1215,205 1245,245 1218,300 1190,350 1200,385 1245,430 1240,470 1255,500 1240,550 1255,590 1250,660 1270,740 1258,800 1270,850 1258,890 1283,930 1305,990', 1380, 400, 2.904, 3),
  ...map('1297,10 1305,70 1312,190 1290,260 1285,290 1297,340 1305,440 1312,480 1305,560 1300,680 1315,690 1320,745', 1380, 740, 2.904, 3)];
path(steps(comp), '#c8c8c8');

// tags beside the scale
function tag(p, stroke, color, x) {
  const y = Math.round(Y(p));
  el('path', { d: `M${x} ${y}l5-8.500H1834.500v17H${x + 5}z`, fill: '#000', stroke, 'fill-opacity': color === '#fff' ? 1 : 0 });
  label(1830, y, p.toFixed(2), color, 'end');
}
el('path', { d: 'M1776 104l5-8h8M1776 104l5 8h8', fill: 'none', stroke: '#e05000' });
el('path', { d: 'M1776 312l5 8H1834.500M1776 312l5-8h8', fill: 'none', stroke: '#3c0' });
tag(2275, '#800000', '#909090', 1783); tag(2272.25, '#8b5a00', '#909090', 1783); tag(2270, '#800000', '#909090', 1783); tag(2262.5, '#800000', '#909090', 1783);
tag(2253, '#900000', '#909090', 1783); tag(2239, '#800000', '#909090', 1783); tag(2232.5, '#8b5a00', '#909090', 1783);
tag(2277, '#a0a000', '#fff', 1783); tag(2271.25, '#a00000', '#fff', 1783); tag(2265, '#a00000', '#fff', 1783); tag(2259.5, '#005000', '#fff', 1783);
tag(2247.5, '#a0a000', '#fff', 1783); tag(2240.75, '#005000', '#fff', 1783); tag(2235.25, '#f00', '#fff', 1776); tag(2233.5, '#0f0', '#fff', 1776);
rect(1825, 946, 9.5, 17, '#000', { stroke: '#0f0' }); label(1830, 955, '0', '#fff', 'end');
rect(1698, 940.5, 127, 40, '#000', { stroke: '#c0c0c0' });
rect(1698.5, 941, 126, 13, '#403c00');
label(1761, 951, 'Composite Start:', '#fff', 'start'); label(1761, 966, '7/1/2016 (200d)', '#fff', 'start');
tag(2228, '#a0a000', '#fff', 1783);

// price and date scales
line(1835.5, 53, 1835.5, 990, '#d3d3d3'); line(1383, 990.5, 1836, 990.5, '#d3d3d3');
for (let p = 2225; p <= 2280; p += 5) { line(1835, Math.round(Y(p)) + .5, 1842, Math.round(Y(p)) + .5, '#d3d3d3'); label(1844, Math.round(Y(p)) + 2, p + '.00', '#d3d3d3', 'axis'); }
[1431, 1512, 1554].forEach(x => line(x + .5, 991, x + .5, 997, '#d3d3d3'));
label(1431, 1007, '1/13', '#d3d3d3', 'axis mid'); label(1512, 1007, '1/16', '#d3d3d3', 'axis mid');
el('path', { d: 'M1837 349.500l8-9h63v19h-63z', fill: '#ff0', stroke: '#fff' }); el('text', { x: 1848, y: 355, 'font-size': 16 }, '2262.50');
el('path', { d: 'M1837 371.500l8-9h63v19h-63z', fill: '#8b0000', stroke: '#fff' }); label(1848, 373, '2261.25', '#eee', 'axis');
```
